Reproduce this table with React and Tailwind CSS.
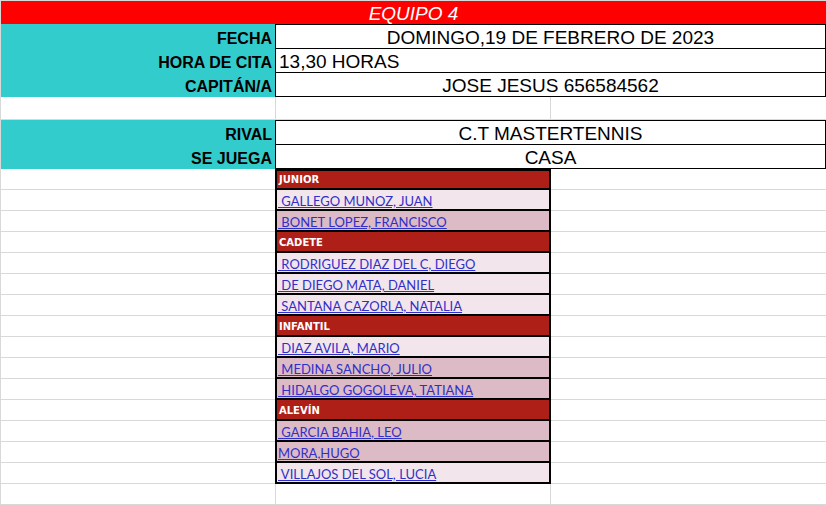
import React from "react";

const groups = [
  {
    name: "JUNIOR",
    players: [
      { n: " GALLEGO MUNOZ, JUAN", dark: false },
      { n: " BONET LOPEZ, FRANCISCO", dark: true },
    ],
  },
  {
    name: "CADETE",
    players: [
      { n: " RODRIGUEZ DIAZ DEL C, DIEGO", dark: false },
      { n: " DE DIEGO MATA, DANIEL", dark: false },
      { n: " SANTANA CAZORLA, NATALIA", dark: false },
    ],
  },
  {
    name: "INFANTIL",
    players: [
      { n: " DIAZ AVILA, MARIO", dark: false },
      { n: " MEDINA SANCHO, JULIO", dark: true },
      { n: " HIDALGO GOGOLEVA, TATIANA", dark: true },
    ],
  },
  {
    name: "ALEVÍN",
    players: [
      { n: " GARCIA BAHIA, LEO", dark: true },
      { n: "MORA,HUGO", dark: true },
      { n: " VILLAJOS DEL SOL, LUCIA", dark: false },
    ],
  },
];

const rows = groups.flatMap((g) => [
  { type: "head", text: g.name },
  ...g.players.map((p) => ({ type: "player", text: p.n, dark: p.dark })),
]);

const Label = ({ children }) => (
  <div className="h-[24px] flex items-end justify-end pr-[3px]">
    <span className="font-bold text-[16px] leading-[18px]">{children}</span>
  </div>
);

const Value = ({ children, left, last }) => (
  <div
    className={`h-[24px] flex items-end ${last ? "" : "border-b border-black"} ${
      left ? "justify-start pl-[3px]" : "justify-center"
    }`}
  >
    <span className="text-[19px] leading-[21px]">{children}</span>
  </div>
);

export default function App() {
  return (
    <div className="w-[826px] h-[505px] bg-white overflow-hidden text-black font-['Liberation_Sans',Arial,sans-serif]">
      <div className="border-l border-t border-[#d9d9d9]">
        {/* Title */}
        <div className="h-[23px] bg-[#ff0000] flex items-end justify-center">
          <span className="italic text-white text-[19px] leading-[21px]">EQUIPO 4</span>
        </div>

        {/* Match info */}
        <div className="flex">
          <div className="w-[274px] h-[73px] bg-[#33cccc]">
            <Label>FECHA</Label>
            <Label>HORA DE CITA</Label>
            <Label>CAPITÁN/A</Label>
          </div>
          <div className="w-[551px] border-t border-x border-black">
            <div className="h-[24px] flex items-end justify-center border-b border-black">
              <span className="text-[19px] leading-[21px]">DOMINGO,19 DE FEBRERO DE 2023</span>
            </div>
            <Value left>13,30 HORAS</Value>
            <Value>JOSE JESUS 656584562</Value>
          </div>
        </div>

        {/* Empty row */}
        <div className="flex h-[23px]">
          <div className="w-[275px] border-r border-b border-[#d9d9d9]" />
          <div className="w-[275px] border-r border-b border-[#d9d9d9]" />
          <div className="flex-1 border-b border-[#d9d9d9]" />
        </div>

        {/* Rival */}
        <div className="flex">
          <div className="w-[274px] h-[49px] bg-[#33cccc]">
            <Label>RIVAL</Label>
            <Label>SE JUEGA</Label>
          </div>
          <div className="w-[551px] border-t border-x border-b border-black">
            <div className="h-[24px] flex items-end justify-center border-b border-black">
              <span className="text-[19px] leading-[21px]">C.T MASTERTENNIS</span>
            </div>
            <div className="h-[23px] flex items-end justify-center">
              <span className="text-[19px] leading-[21px]">CASA</span>
            </div>
          </div>
        </div>

        {/* Players table */}
        {rows.map((r, i) => (
          <div key={i} className="flex h-[21px]">
            <div className="w-[274px] border-b border-[#d9d9d9]" />
            <div
              className={`w-[276px] border-x-2 border-b-2 border-black flex items-end ${
                i === 0 ? "border-t-2" : ""
              } ${
                r.type === "head"
                  ? "bg-[#ae1f17] pl-[2px] pb-[2px]"
                  : r.dark
                  ? "bg-[#dcbac6] pl-px"
                  : "bg-[#f2e5eb] pl-px"
              }`}
            >
              {r.type === "head" ? (
                <span className="text-white font-bold text-[10px] leading-[12px] font-['DejaVu_Sans',Verdana,sans-serif]">
                  {r.text}
                </span>
              ) : (
                <span className="whitespace-pre underline text-[#3030c8] text-[13px] leading-[16px] font-['Lato',sans-serif]">
                  {r.text}
                </span>
              )}
            </div>
            <div className="flex-1 border-b border-[#d9d9d9]" />
          </div>
        ))}

        {/* Trailing empty row */}
        <div className="flex h-[21px]">
          <div className="w-[275px] border-r border-b border-[#d9d9d9]" />
          <div className="w-[275px] border-r border-b border-[#d9d9d9]" />
          <div className="flex-1 border-b border-[#d9d9d9]" />
        </div>
      </div>
    </div>
  );
}
